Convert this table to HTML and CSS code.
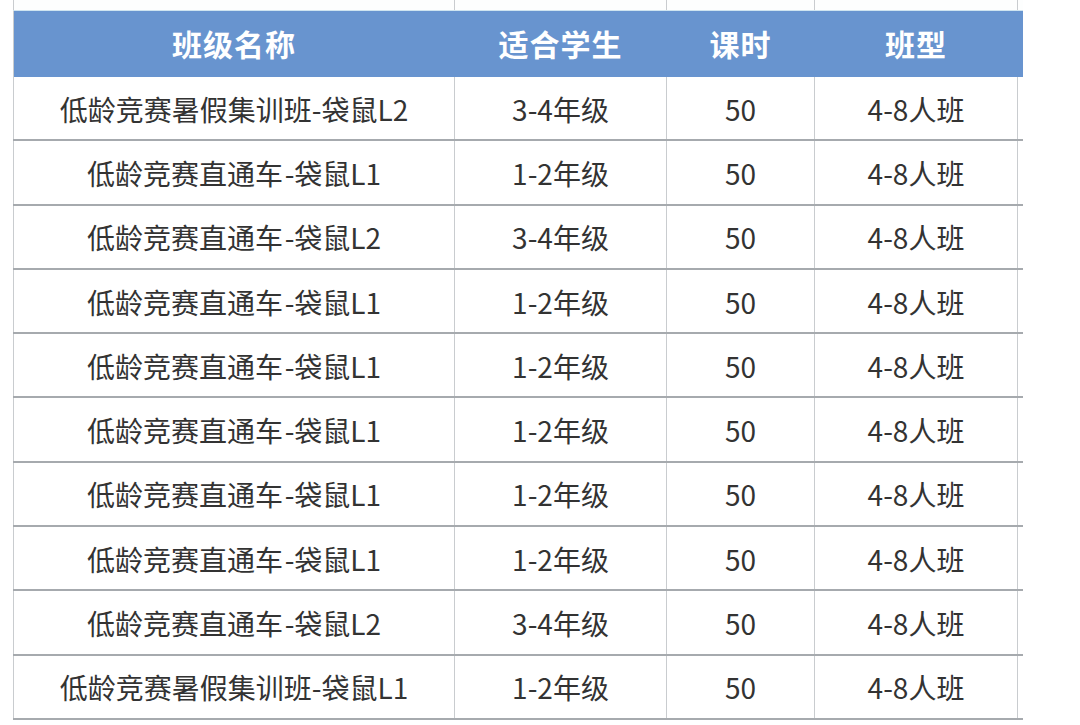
FILE: index.html
```html
<!DOCTYPE html>
<html lang="zh-CN">
<head>
<meta charset="utf-8">
<link rel="stylesheet" href="styles.css">
</head>
<body>
<div class="sheet">
  <div class="row top">
    <div class="cell"></div><div class="cell"></div><div class="cell"></div><div class="cell"></div><div class="cell"></div>
  </div>
  <div class="row head">
    <div class="cell">班级名称</div><div class="cell">适合学生</div><div class="cell">课时</div><div class="cell">班型</div><div class="cell"></div>
  </div>
  <div class="row body">
    <div class="cell">低龄竞赛暑假集训班-袋鼠L2</div><div class="cell">3-4年级</div><div class="cell">50</div><div class="cell">4-8人班</div><div class="cell"></div>
  </div>
  <div class="row body">
    <div class="cell">低龄竞赛直通车&#8202;-袋鼠L1</div><div class="cell">1-2年级</div><div class="cell">50</div><div class="cell">4-8人班</div><div class="cell"></div>
  </div>
  <div class="row body">
    <div class="cell">低龄竞赛直通车&#8202;-袋鼠L2</div><div class="cell">3-4年级</div><div class="cell">50</div><div class="cell">4-8人班</div><div class="cell"></div>
  </div>
  <div class="row body">
    <div class="cell">低龄竞赛直通车&#8202;-袋鼠L1</div><div class="cell">1-2年级</div><div class="cell">50</div><div class="cell">4-8人班</div><div class="cell"></div>
  </div>
  <div class="row body">
    <div class="cell">低龄竞赛直通车&#8202;-袋鼠L1</div><div class="cell">1-2年级</div><div class="cell">50</div><div class="cell">4-8人班</div><div class="cell"></div>
  </div>
  <div class="row body">
    <div class="cell">低龄竞赛直通车&#8202;-袋鼠L1</div><div class="cell">1-2年级</div><div class="cell">50</div><div class="cell">4-8人班</div><div class="cell"></div>
  </div>
  <div class="row body">
    <div class="cell">低龄竞赛直通车&#8202;-袋鼠L1</div><div class="cell">1-2年级</div><div class="cell">50</div><div class="cell">4-8人班</div><div class="cell"></div>
  </div>
  <div class="row body">
    <div class="cell">低龄竞赛直通车&#8202;-袋鼠L1</div><div class="cell">1-2年级</div><div class="cell">50</div><div class="cell">4-8人班</div><div class="cell"></div>
  </div>
  <div class="row body">
    <div class="cell">低龄竞赛直通车&#8202;-袋鼠L2</div><div class="cell">3-4年级</div><div class="cell">50</div><div class="cell">4-8人班</div><div class="cell"></div>
  </div>
  <div class="row body">
    <div class="cell">低龄竞赛暑假集训班-袋鼠L1</div><div class="cell">1-2年级</div><div class="cell">50</div><div class="cell">4-8人班</div><div class="cell"></div>
  </div>
</div>
</body>
</html>
```

FILE: styles.css
```css
html, body {
  margin: 0;
  padding: 0;
  background: #ffffff;
}
body {
  width: 1080px;
  height: 725px;
  overflow: hidden;
  font-family: "Noto Sans CJK SC", "Noto Sans", sans-serif;
}
.sheet {
  margin-left: 13px;
  width: 1010px;
  overflow: hidden;
}
.row {
  display: grid;
  grid-template-columns: 441px 212px 148px 203px 40px;
  box-sizing: border-box;
}
.cell {
  border-left: 1px solid #c9cccf;
  display: flex;
  align-items: center;
  justify-content: center;
  white-space: pre;
}
.top {
  height: 11px;
  background: #fdfefe;
  border-bottom: 1px solid #cfe4f0;
}
.head {
  height: 66px;
  background: #6894cf;
  color: #ffffff;
  font-size: 30px;
  font-weight: 700;
  letter-spacing: 1px;
}
.head .cell {
  border-left-color: #6894cf;
  padding-bottom: 2px;
}
.head .cell:first-child {
  border-left-color: #c9cccf;
}
.body {
  height: 64.3px;
  border-bottom: 2px solid #a6aaae;
  color: #333333;
  font-size: 28px;
  font-weight: 400;
}
.body .cell {
  padding-top: 1px;
}
```
